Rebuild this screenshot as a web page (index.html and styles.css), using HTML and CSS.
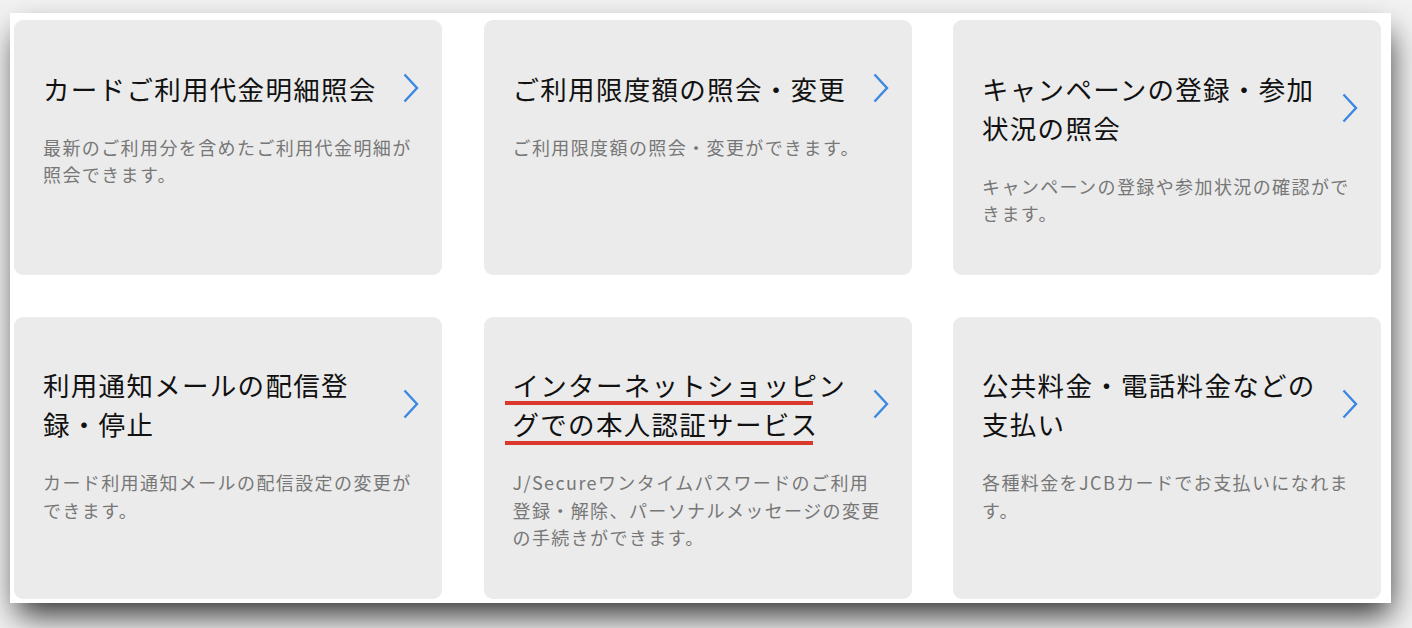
FILE: index.html
```html
<!DOCTYPE html>
<html lang="ja">
<head>
    <meta charset="UTF-8">
    <meta name="viewport" content="width=device-width, initial-scale=1.0">
    <title>会員メニュー</title>
    <link rel="stylesheet" href="styles.css">
</head>
<body>
    <div class="window">
        <ul class="menu-grid">
            <li class="menu-card">
                <a class="menu-link" href="#">
                    <div class="menu-head">
                        <h2 class="menu-title">カードご利用代金明細照会</h2>
                        <svg class="chevron" viewBox="0 0 16 30" aria-hidden="true"><path d="M1.5 1.5 L14 15 L1.5 28.5"/></svg>
                    </div>
                    <p class="menu-desc">最新のご利用分を含めたご利用代金明細が照会できます。</p>
                </a>
            </li>
            <li class="menu-card">
                <a class="menu-link" href="#">
                    <div class="menu-head">
                        <h2 class="menu-title">ご利用限度額の照会・変更</h2>
                        <svg class="chevron" viewBox="0 0 16 30" aria-hidden="true"><path d="M1.5 1.5 L14 15 L1.5 28.5"/></svg>
                    </div>
                    <p class="menu-desc">ご利用限度額の照会・変更ができます。</p>
                </a>
            </li>
            <li class="menu-card">
                <a class="menu-link" href="#">
                    <div class="menu-head">
                        <h2 class="menu-title">キャンペーンの登録・参加状況の照会</h2>
                        <svg class="chevron" viewBox="0 0 16 30" aria-hidden="true"><path d="M1.5 1.5 L14 15 L1.5 28.5"/></svg>
                    </div>
                    <p class="menu-desc">キャンペーンの登録や参加状況の確認ができます。</p>
                </a>
            </li>
            <li class="menu-card">
                <a class="menu-link" href="#">
                    <div class="menu-head">
                        <h2 class="menu-title">利用通知メールの配信登録・停止</h2>
                        <svg class="chevron" viewBox="0 0 16 30" aria-hidden="true"><path d="M1.5 1.5 L14 15 L1.5 28.5"/></svg>
                    </div>
                    <p class="menu-desc">カード利用通知メールの配信設定の変更ができます。</p>
                </a>
            </li>
            <li class="menu-card">
                <a class="menu-link" href="#">
                    <div class="menu-head">
                        <h2 class="menu-title">インターネットショッピングでの本人認証サービス</h2>
                        <svg class="chevron" viewBox="0 0 16 30" aria-hidden="true"><path d="M1.5 1.5 L14 15 L1.5 28.5"/></svg>
                    </div>
                    <p class="menu-desc">J/Secureワンタイムパスワードのご利用登録・解除、パーソナルメッセージの変更の手続きができます。</p>
                </a>
                <!-- red marker lines drawn over the title -->
                <span class="marker marker-first"></span>
                <span class="marker marker-second"></span>
            </li>
            <li class="menu-card">
                <a class="menu-link" href="#">
                    <div class="menu-head">
                        <h2 class="menu-title">公共料金・電話料金などの支払い</h2>
                        <svg class="chevron" viewBox="0 0 16 30" aria-hidden="true"><path d="M1.5 1.5 L14 15 L1.5 28.5"/></svg>
                    </div>
                    <p class="menu-desc">各種料金をJCBカードでお支払いになれます。</p>
                </a>
            </li>
        </ul>
    </div>
</body>
</html>
```

FILE: styles.css
```css
html {
    background-color: #f2f2f2;
}
body {
    margin: 0;
    padding: 13px 0 25px 10px;
    min-height: 628px;
    box-sizing: border-box;
    font-family: "Noto Sans CJK JP", "Noto Sans", sans-serif;
}
.window {
    width: 1381px;
    height: 590px;
    background-color: #fff;
    box-shadow: 3px 16px 30px -4px rgba(0, 0, 0, 0.8);
}
.menu-grid {
    list-style: none;
    margin: 0;
    padding: 7px 10px 4px 4px;
    display: grid;
    grid-template-columns: repeat(3, 1fr);
    column-gap: 41.5px;
    row-gap: 42px;
}
.menu-card {
    position: relative;
    background-color: #ebebeb;
    border-radius: 9px;
}
.menu-link {
    display: block;
    padding: 48.5px 23px 47px 29px;
    color: inherit;
    text-decoration: none;
}
.menu-head {
    display: flex;
    align-items: center;
    column-gap: 16px;
    margin-bottom: 26px;
}
.menu-title {
    flex: 1;
    margin: 0;
    font-size: 26.5px;
    font-weight: 400;
    line-height: 39px;
    letter-spacing: 1.3px;
    color: #111;
}
.chevron {
    width: 16px;
    height: 30px;
    flex-shrink: 0;
    fill: none;
    stroke: #3a88e2;
    stroke-width: 2.4;
}
.menu-desc {
    margin: 0;
    font-size: 18px;
    line-height: 27.5px;
    letter-spacing: 1.4px;
    color: #777;
}
.marker {
    position: absolute;
    left: 21px;
    width: 308px;
    height: 4.5px;
    background-color: #d8392b;
}
.marker-first {
    top: 84px;
}
.marker-second {
    top: 124px;
}
```
